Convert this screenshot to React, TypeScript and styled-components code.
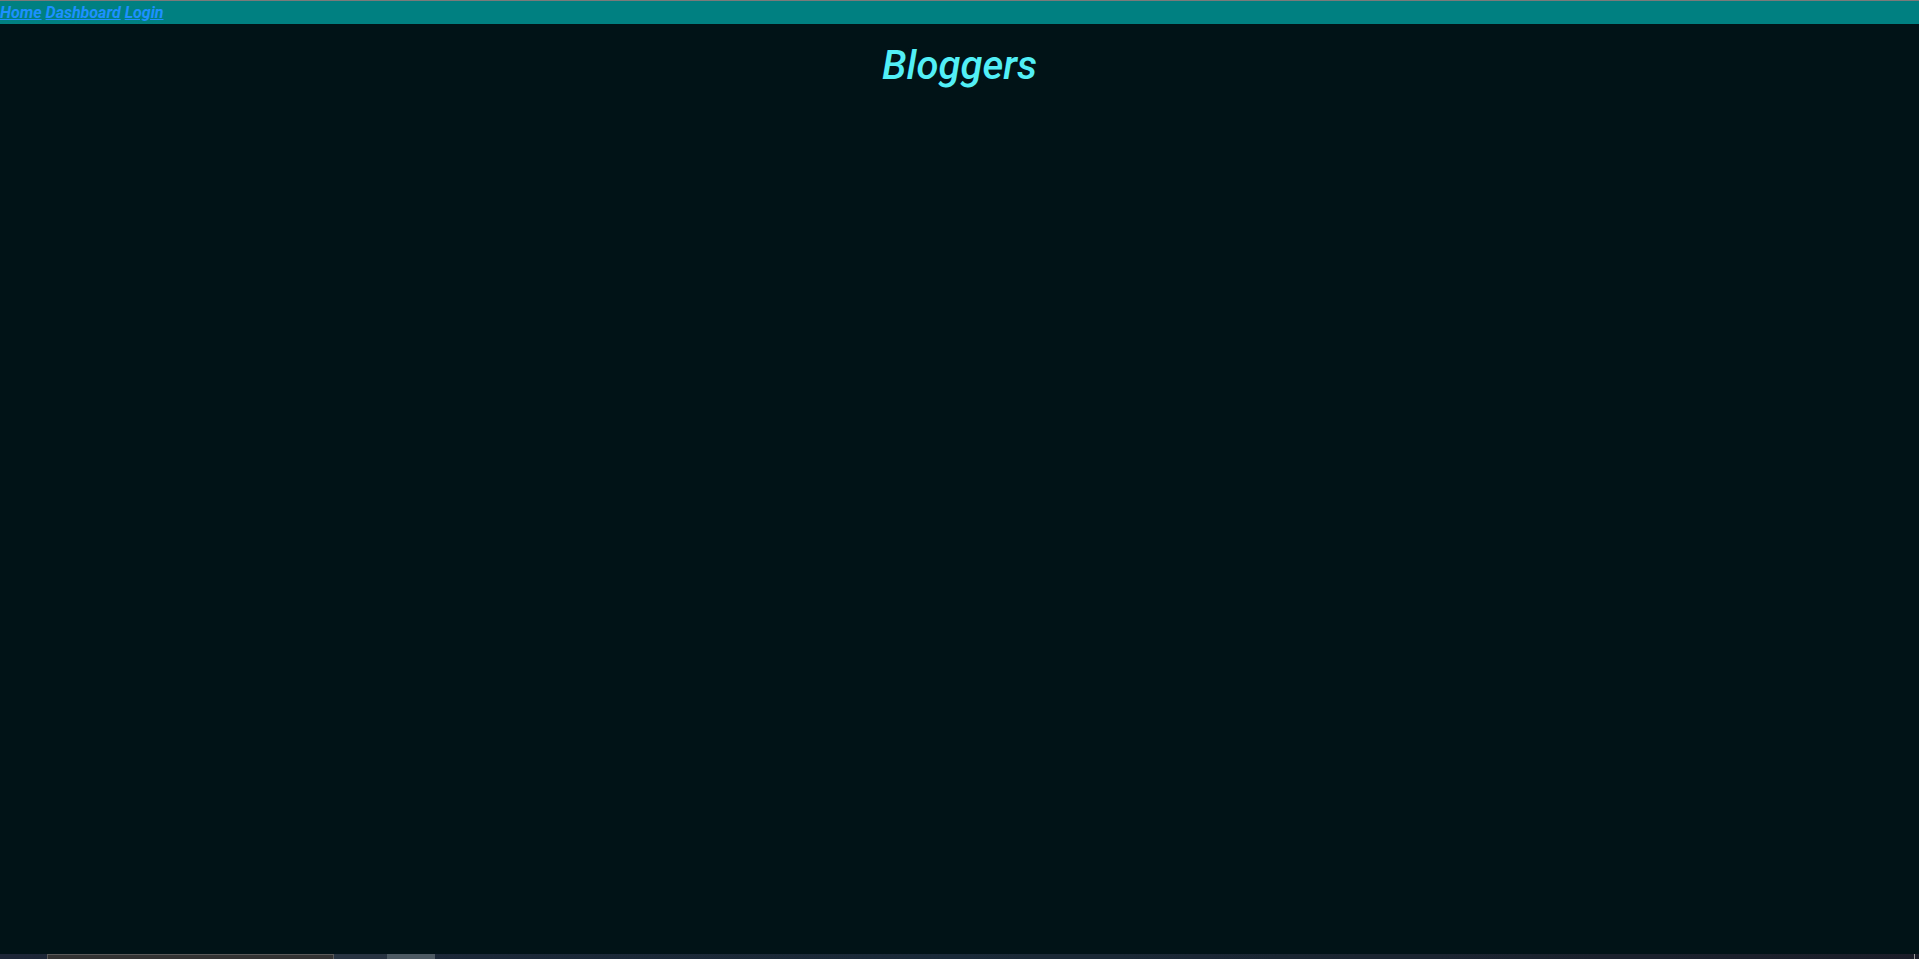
import React from "react";
import styled, { createGlobalStyle } from "styled-components";

const GlobalStyle = createGlobalStyle`
  html, body {
    margin: 0;
    padding: 0;
    background: #011316;
  }
  body {
    font-family: Roboto, "Liberation Sans", sans-serif;
  }
`;

const Page = styled.div`
  min-height: 100vh;
  display: flex;
  flex-direction: column;
  background: #011316;
`;

const NavBar = styled.nav`
  display: flex;
  align-items: center;
  gap: 4px;
  height: 23px;
  background: #008080;
  border-top: 1px solid #7a7a7a;
  line-height: 23px;
`;

const NavLink = styled.a`
  font-family: Roboto, "Liberation Sans", sans-serif;
  font-size: 16px;
  font-style: italic;
  font-weight: 700;
  color: #1e90ff;
  text-decoration: underline;
  cursor: pointer;
`;

const Main = styled.main`
  flex: 1;
`;

const Title = styled.h1`
  margin: 18px 0 0;
  text-align: center;
  font-family: Roboto, "Liberation Sans", sans-serif;
  font-size: 40px;
  font-style: italic;
  font-weight: 500;
  color: #52f0f6;
  line-height: normal;
`;

const Taskbar = styled.div`
  display: flex;
  height: 5px;
  background: linear-gradient(90deg, #1c2636 0%, #1b2a38 50%, #1b1e29 100%);
`;

const TaskSeg = styled.div<{ $w: number; $bg: string; $border?: string }>`
  width: ${(p) => p.$w}px;
  flex: none;
  box-sizing: border-box;
  background: ${(p) => p.$bg};
  ${(p) => (p.$border ? `border: 1px solid ${p.$border}; border-bottom: none;` : "")}
`;

const TaskFill = styled.div`
  flex: 1;
`;

const TaskEdge = styled.div`
  width: 1px;
  flex: none;
  background: #9a9a9a;
  margin-right: 4px;
`;

export default function App() {
  return (
    <>
      <GlobalStyle />
      <Page>
        <NavBar>
          <NavLink>Home</NavLink>
          <NavLink>Dashboard</NavLink>
          <NavLink>Login</NavLink>
        </NavBar>
        <Main>
          <Title>Bloggers</Title>
        </Main>
        <Taskbar>
          <TaskSeg $w={47} $bg="transparent" />
          <TaskSeg $w={287} $bg="#333333" $border="#5a5a5a" />
          <TaskSeg $w={53} $bg="#283441" />
          <TaskSeg $w={48} $bg="#4d5a63" />
          <TaskFill />
          <TaskEdge />
        </Taskbar>
      </Page>
    </>
  );
}
